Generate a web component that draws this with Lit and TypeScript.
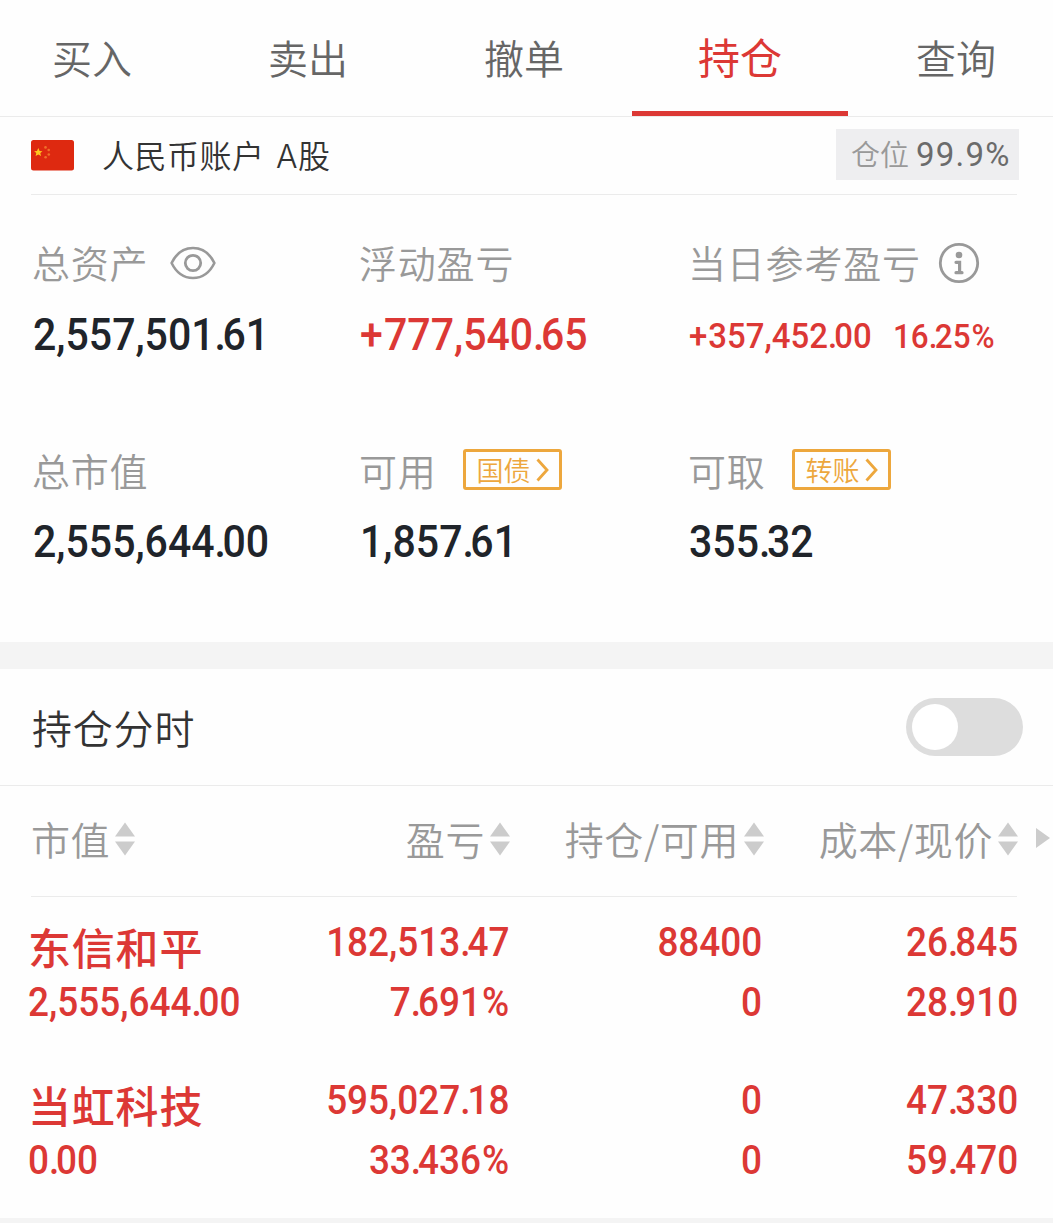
import { LitElement, html, css, svg } from "lit";
import { customElement, property } from "lit/decorators.js";
import { classMap } from "lit/directives/class-map.js";

interface Holding {
  name: string;
  value: string;
  profit: string;
  rate: string;
  amount: string;
  available: string;
  cost: string;
  price: string;
}

const TABS = ["买入", "卖出", "撤单", "持仓", "查询"];
const ACTIVE_TAB = "持仓";

const HOLDINGS: Holding[] = [
  {
    name: "东信和平", value: "2,555,644.00",
    profit: "182,513.47", rate: "7.691%",
    amount: "88400", available: "0",
    cost: "26.845", price: "28.910",
  },
  {
    name: "当虹科技", value: "0.00",
    profit: "595,027.18", rate: "33.436%",
    amount: "0", available: "0",
    cost: "47.330", price: "59.470",
  },
];

/** Condensed figures with a tight decimal point, in the sizes used by the summary and the table. */
@customElement("trade-figure")
class TradeFigure extends LitElement {
  @property() value = "";
  @property() size = "table";
  @property() align = "left";

  static styles = css`
    :host { display: block; white-space: nowrap; font-family: Roboto, "Liberation Sans", sans-serif; font-weight: 500; }
    .fig { display: inline-block; transform-origin: left center; }
    .right { transform-origin: right center; }
    .point { letter-spacing: -0.085em; }
    .plus { padding-right: 0.03em; }
    .percent { padding-left: 0.03em; }
    .large { font-size: 44.6px; line-height: 54px; transform: scaleX(0.92); }
    .medium { font-size: 35.8px; line-height: 56px; transform: scaleX(0.92); }
    .small { font-size: 33.8px; line-height: 57px; transform: scaleX(0.93); }
    .table { font-size: 40.6px; line-height: 60px; transform: scaleX(0.91); }
  `;

  private part(text: string) {
    if (text === ".") return html`<span class="point">.</span>`;
    if (text === "+") return html`<span class="plus">+</span>`;
    if (text === "%") return html`<span class="percent">%</span>`;
    return text;
  }

  render() {
    const parts = this.value.split(/([.+%])/).filter((p) => p !== "");
    const classes = { fig: true, [this.size]: true, right: this.align === "right" };
    return html`<span class=${classMap(classes)}>${parts.map((p) => this.part(p))}</span>`;
  }
}

@customElement("sort-header")
class SortHeader extends LitElement {
  @property() label = "";

  static styles = css`
    :host { display: flex; align-items: center; gap: 5px; height: 56px; white-space: nowrap; }
    .label { letter-spacing: 0.6px; line-height: 56px; margin-top: -8px; }
    .arrows { display: block; width: 20px; height: 34px; margin-top: -6px; fill: #cccccc; }
  `;

  render() {
    return html`
      <span class="label">${this.label}</span>
      <svg class="arrows" viewBox="0 0 20 34">
        <path d="M10 0.5 L20 14.5 H0 Z" />
        <path d="M0 19.5 H20 L10 33.5 Z" />
      </svg>
    `;
  }
}

@customElement("app-root")
class AppRoot extends LitElement {
  static styles = css`
    :host {
      display: block;
      width: 1053px;
      height: 1223px;
      overflow: hidden;
      background: #fefefe;
      color: #333333;
      font-family: "Noto Sans CJK SC", sans-serif;
      font-weight: 350;
    }
    * { box-sizing: border-box; }
    svg { display: block; flex: none; }

    .tabs { display: flex; height: 117px; margin-left: -16px; border-bottom: 1px solid #ebebeb; }
    .tab {
      flex: none; width: 216px; height: 116px; padding-top: 28px; text-align: center;
      font-size: 40px; line-height: 58px; color: #666666; border-bottom: 5px solid transparent;
    }
    .tab.active { color: #dc3835; border-bottom-color: #dc3835; font-size: 42px; font-weight: 400; padding-top: 27px; }

    .account { display: flex; align-items: center; height: 78px; margin: 0 36px 0 31px; border-bottom: 1px solid #ebebeb; }
    .account-name {
      margin: 3px 0 0 28px; font-family: Inter, "Noto Sans CJK SC", sans-serif;
      font-size: 32px; letter-spacing: 0.5px; line-height: 44px; word-spacing: 2px;
    }
    .ratio {
      display: flex; align-items: center; gap: 7px; width: 183px; height: 51px; margin: -2px -2px 0 auto; padding: 0 0 3px 15px;
      background: #eeeef0; color: #999999; font-size: 29px; line-height: 46px;
    }
    .ratio-value { margin-top: 3px; font-family: Roboto, sans-serif; font-size: 33px; font-weight: 400; color: #6b6b6b; letter-spacing: 1.2px; }

    .summary { display: grid; grid-template-columns: 327px 329px 1fr; grid-template-rows: 208px 1fr; height: 447px; padding: 41px 0 0 33px; }
    .item-label {
      display: flex; align-items: center; height: 56px; margin-left: -1px;
      font-size: 38px; letter-spacing: 0.8px; color: #999999; white-space: nowrap;
    }
    .item-text { margin-top: -5px; line-height: 56px; }
    .eye { margin: -2px 0 0 22px; }
    .info { margin: -2px 0 0 17px; }
    .item-value { display: flex; margin-top: 16px; color: #20242a; }
    .holdings-value { margin-top: 15px; }
    .daily { gap: 5px; }
    .up { color: #dc3835; }
    .link {
      display: flex; align-items: center; justify-content: center; gap: 5px; height: 41px; width: 99px; margin: -5px 0 0 26px; padding-left: 1px;
      border: 3px solid #eda73d; border-radius: 3px; color: #eda73d; font-size: 27px; letter-spacing: 0; line-height: 34px;
    }

    .band { height: 27px; background: #f4f4f4; }

    .chart-row { display: flex; align-items: center; justify-content: space-between; height: 117px; padding: 0 30px 0 32px; border-bottom: 1px solid #ebebeb; }
    .chart-title { font-size: 40px; letter-spacing: 0.8px; line-height: 58px; }
    .toggle { width: 117px; height: 58px; padding: 6px; border-radius: 29px; background: #dddddd; }
    .knob { width: 46px; height: 46px; border-radius: 50%; background: #ffffff; }

    .row { display: grid; grid-template-columns: 240px 241px 253px 256px; padding-left: 28px; }
    .head { position: relative; height: 111px; align-items: center; font-size: 39px; color: #999999; }
    .head::after { content: ""; position: absolute; left: 31px; right: 36px; bottom: 0; height: 1px; background: #ebebeb; }
    .head-first { padding-left: 3px; }
    .cell-end { display: flex; justify-content: flex-end; }
    .profit-head { margin-right: -1px; }
    .amount-head { margin-right: -2px; }
    .more { position: absolute; left: 1036px; top: 42px; }

    .holding { height: 158px; color: #dc3835; padding-top: 15px; }
    .holding-last { height: 163px; }
    .name { height: 60px; padding-top: 4px; font-size: 43px; line-height: 60px; font-weight: 500; letter-spacing: 0.8px; white-space: nowrap; }
    .numbers { display: flex; flex-direction: column; align-items: flex-end; }
    .footer { height: 5px; background: #f4f4f4; }
  `;

  private flag() {
    return svg`
      <svg width="43" height="31" viewBox="0 0 43 31">
        <rect width="43" height="30.5" rx="2.5" fill="#de2910"/>
        <path fill="#ffc81f" d="M7.3 8 L8.6 10.9 L11.5 11.2 L9.3 13.1 L10 16 L7.3 14.5 L4.6 16 L5.3 13.1 L3.1 11.2 L6 10.9 Z"/>
        <g fill="#f0702a">
          <circle cx="14.5" cy="7.4" r="1.3"/><circle cx="17.7" cy="10" r="1.3"/>
          <circle cx="17.8" cy="14.5" r="1.3"/><circle cx="14.6" cy="17.3" r="1.3"/>
        </g>
      </svg>`;
  }

  private eye() {
    return html`
      <svg class="eye" width="46" height="34" viewBox="0 0 46 34" fill="none" stroke="#999999">
        <path stroke-width="2.6" stroke-linejoin="round" d="M1.6 17 C6 8 13.5 2 23 2 S40 8 44.4 17 C40 26 32.5 32 23 32 S6 26 1.6 17 Z"/>
        <circle cx="23" cy="17" r="7.7" stroke-width="2.8"/>
      </svg>`;
  }

  private info() {
    return html`
      <svg class="info" width="42" height="42" viewBox="0 0 42 42">
        <circle cx="21" cy="21" r="18.7" fill="none" stroke="#999999" stroke-width="2.8"/>
        <circle cx="21" cy="13" r="3.3" fill="#999999"/>
        <path d="M18 20.3 H21.6 V30.5 M18 30.7 H24" fill="none" stroke="#999999" stroke-width="3.2" stroke-linecap="round"/>
      </svg>`;
  }

  private link(label: string) {
    return html`
      <span class="link"><span>${label}</span>
        <svg width="13" height="24" viewBox="0 0 13 24" fill="none" stroke="#eda73d" stroke-width="2.8"><path d="M1.5 1.5 L11 12 L1.5 22.5"/></svg>
      </span>`;
  }

  private label(text: string, extra: unknown = "") {
    return html`<div class="item-label"><span class="item-text">${text}</span>${extra}</div>`;
  }

  private holding(h: Holding, last: boolean) {
    const pair = (a: string, b: string) => html`
      <div class="numbers">
        <trade-figure align="right" .value=${a}></trade-figure>
        <trade-figure align="right" .value=${b}></trade-figure>
      </div>`;
    return html`
      <div class=${classMap({ row: true, holding: true, "holding-last": last })}>
        <div>
          <div class="name">${h.name}</div>
          <trade-figure .value=${h.value}></trade-figure>
        </div>
        ${pair(h.profit, h.rate)} ${pair(h.amount, h.available)} ${pair(h.cost, h.price)}
      </div>`;
  }

  render() {
    return html`
      <nav class="tabs">
        ${TABS.map((t) => html`<div class=${classMap({ tab: true, active: t === ACTIVE_TAB })}>${t}</div>`)}
      </nav>

      <div class="account">
        ${this.flag()}
        <span class="account-name">人民币账户 A股</span>
        <span class="ratio">仓位<span class="ratio-value">99.9%</span></span>
      </div>

      <section class="summary">
        <div>
          ${this.label("总资产", this.eye())}
          <div class="item-value"><trade-figure size="large" value="2,557,501.61"></trade-figure></div>
        </div>
        <div>
          ${this.label("浮动盈亏")}
          <div class="item-value up"><trade-figure size="large" value="+777,540.65"></trade-figure></div>
        </div>
        <div>
          ${this.label("当日参考盈亏", this.info())}
          <div class="item-value up daily">
            <trade-figure size="medium" value="+357,452.00"></trade-figure>
            <trade-figure size="small" value="16.25%"></trade-figure>
          </div>
        </div>
        <div>
          ${this.label("总市值")}
          <div class="item-value holdings-value"><trade-figure size="large" value="2,555,644.00"></trade-figure></div>
        </div>
        <div>
          ${this.label("可用", this.link("国债"))}
          <div class="item-value holdings-value"><trade-figure size="large" value="1,857.61"></trade-figure></div>
        </div>
        <div>
          ${this.label("可取", this.link("转账"))}
          <div class="item-value holdings-value"><trade-figure size="large" value="355.32"></trade-figure></div>
        </div>
      </section>

      <div class="band"></div>

      <div class="chart-row">
        <span class="chart-title">持仓分时</span>
        <div class="toggle"><div class="knob"></div></div>
      </div>

      <div class="row head">
        <div class="head-first"><sort-header label="市值"></sort-header></div>
        <div class="cell-end profit-head"><sort-header label="盈亏"></sort-header></div>
        <div class="cell-end amount-head"><sort-header label="持仓/可用"></sort-header></div>
        <div class="cell-end"><sort-header label="成本/现价"></sort-header></div>
        <svg class="more" width="14" height="20" viewBox="0 0 14 20"><path d="M0 0 L14 10 L0 20 Z" fill="#cccccc"/></svg>
      </div>

      ${HOLDINGS.map((h, i) => this.holding(h, i === HOLDINGS.length - 1))}
      <div class="footer"></div>
    `;
  }
}
